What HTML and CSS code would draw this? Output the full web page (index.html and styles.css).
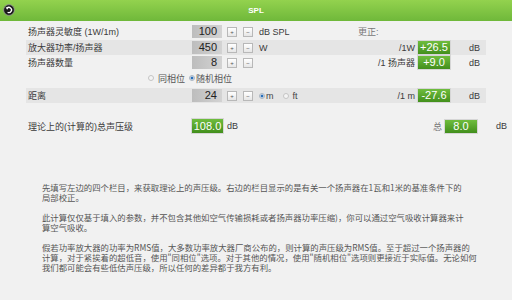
FILE: index.html
```html
<!DOCTYPE html>
<html lang="zh">
<head>
<meta charset="utf-8">
<link rel="stylesheet" href="styles.css">
</head>
<body>
<div class="header">
  <svg class="back" width="12" height="12" viewBox="0 0 12 12">
    <circle cx="6" cy="6" r="5.4" fill="#1a1a1a" stroke="#9a9a9a" stroke-width="0.8"/>
    <path d="M4 4.2 A2.6 2.6 0 1 1 4.6 8.2" fill="none" stroke="#fff" stroke-width="1.3"/>
    <path d="M2.6 3.2 L5.4 3.4 L4.2 5.8 Z" fill="#fff"/>
  </svg>
  <div class="title">SPL</div>
</div>

<div class="calc">
  <div class="row r1">
    <div class="label">扬声器灵敏度 (1W/1m)</div>
    <div class="num">100</div>
    <div class="btns"><span class="btn">+</span><span class="btn">−</span></div>
    <div class="unit">dB SPL</div>
    <div class="corr-head">更正:</div>
  </div>
  <div class="row r2 stripe">
    <div class="label">放大器功率/扬声器</div>
    <div class="num">450</div>
    <div class="btns"><span class="btn">+</span><span class="btn">−</span></div>
    <div class="unit">W</div>
    <div class="per">/1W</div>
    <div class="green">+26.5</div>
    <div class="db">dB</div>
  </div>
  <div class="row r3">
    <div class="label">扬声器数量</div>
    <div class="num">8</div>
    <div class="btns"><span class="btn">+</span><span class="btn">−</span></div>
    <div class="unit"></div>
    <div class="per">/1 扬声器</div>
    <div class="green">+9.0</div>
    <div class="db">dB</div>
  </div>
  <div class="radios">
    <span class="radio"></span><span class="rtext">同相位</span>
    <span class="radio on"></span><span class="rtext">随机相位</span>
  </div>
  <div class="row r4 stripe">
    <div class="label">距离</div>
    <div class="num">24</div>
    <div class="btns"><span class="btn">+</span><span class="btn">−</span></div>
    <div class="unit units"><span class="radio on"></span><span class="rtext">m</span><span class="radio"></span><span class="rtext">ft</span></div>
    <div class="per">/1 m</div>
    <div class="green">-27.6</div>
    <div class="db">dB</div>
  </div>
  <div class="row total">
    <div class="label">理论上的(计算的)总声压级</div>
    <div class="green big">108.0</div>
    <div class="tunit">dB</div>
    <div class="per">总</div>
    <div class="green">8.0</div>
    <div class="db">dB</div>
  </div>
</div>

<div class="text">
  <p>先填写左边的四个栏目，来获取理论上的声压级。右边的栏目显示的是有关一个扬声器在1瓦和1米的基准条件下的<br>局部校正。</p>
  <p>此计算仅仅基于填入的参数，并不包含其他如空气传输损耗或者扬声器功率压缩)，你可以通过空气吸收计算器来计<br>算空气吸收。</p>
  <p>假若功率放大器的功率为RMS值，大多数功率放大器厂商公布的，则计算的声压级为RMS值。至于超过一个扬声器的<br>计算，对于紧挨着的超低音，使用"同相位"选项。对于其他的情况，使用"随机相位"选项则更接近于实际值。无论如何<br>我们都可能会有些低估声压级，所以任何的差异都于我方有利。</p>
</div>
</body>
</html>
```

FILE: styles.css
```css
html, body {
  margin: 0;
  padding: 0;
}
body {
  width: 512px;
  height: 300px;
  overflow: hidden;
  background: #f1f1f1;
  font-family: "Liberation Sans", "Noto Sans CJK SC", sans-serif;
  color: #3a3a3a;
}
.header {
  height: 21px;
  background: linear-gradient(#93d24e, #6fb83a);
  display: flex;
  align-items: center;
  justify-content: center;
  position: relative;
}
.back {
  position: absolute;
  left: 3px;
  top: 4px;
}
.title {
  color: #fff;
  font-size: 8px;
  font-weight: bold;
}
.calc {
  margin-left: 26px;
  width: 460px;
  padding-top: 3px;
  font-size: 9px;
}
.row {
  display: grid;
  grid-template-columns: 166px 30px 37px 99px 60px 32px 1fr;
  align-items: center;
  height: 15px;
}
.stripe {
  background: #e5e5e5;
}
.r2 { margin-top: 1px; }
.r4 { margin-top: 2px; }
.label {
  padding-left: 2px;
  white-space: nowrap;
}
.num {
  height: 13px;
  line-height: 13px;
  background: linear-gradient(90deg, #bdbdbd, #d3d3d3);
  text-align: right;
  padding-right: 5px;
  font-size: 11px;
  color: #222;
}
.btns {
  display: flex;
  gap: 6px;
  padding-left: 5px;
}
.btn {
  width: 8px;
  height: 8px;
  border: 1px solid #b8b8b8;
  background: linear-gradient(#ffffff, #e6e6e6);
  font-size: 6px;
  line-height: 8px;
  text-align: center;
  color: #555;
}
.unit {
  white-space: nowrap;
}
.corr-head {
  color: #777;
}
.per {
  text-align: right;
  padding-right: 3px;
  white-space: nowrap;
}
.green {
  height: 13px;
  line-height: 13px;
  background: linear-gradient(#6fbd3e, #428f1c);
  outline: 1px solid #d6d6d6;
  color: #fff;
  font-size: 11px;
  text-align: center;
}
.db {
  padding-left: 19px;
}
.radios {
  height: 16px;
  display: flex;
  align-items: center;
  padding-left: 122px;
  font-size: 9px;
  color: #555;
}
.radio {
  width: 4px;
  height: 4px;
  border-radius: 50%;
  border: 1px solid #c4c4c4;
  background: #f4f4f4;
  margin-right: 4px;
}
.radio.on {
  background: radial-gradient(circle, #2a6fb8 45%, #dfe8f2 60%);
  border-color: #aab4c0;
  margin-right: 1px;
}
.rtext {
  margin-right: 4px;
}
.units {
  display: flex;
  align-items: center;
  color: #444;
}
.units .rtext {
  margin-right: 9px;
}
.total {
  margin-top: 15px;
  height: 16px;
  grid-template-columns: 166px 31px 201px 21px 32px 1fr;
}
.green.big {
  height: 14px;
  line-height: 14px;
}
.tunit {
  padding-left: 4px;
}
.total .per {
  color: #777;
}
.text {
  margin: 48px 0 0 42px;
  width: 440px;
  font-family: "Noto Sans CJK SC", sans-serif;
  font-size: 8.4px;
  line-height: 10px;
  color: #555;
}
.text p {
  margin: 0 0 10px 0;
}
```
